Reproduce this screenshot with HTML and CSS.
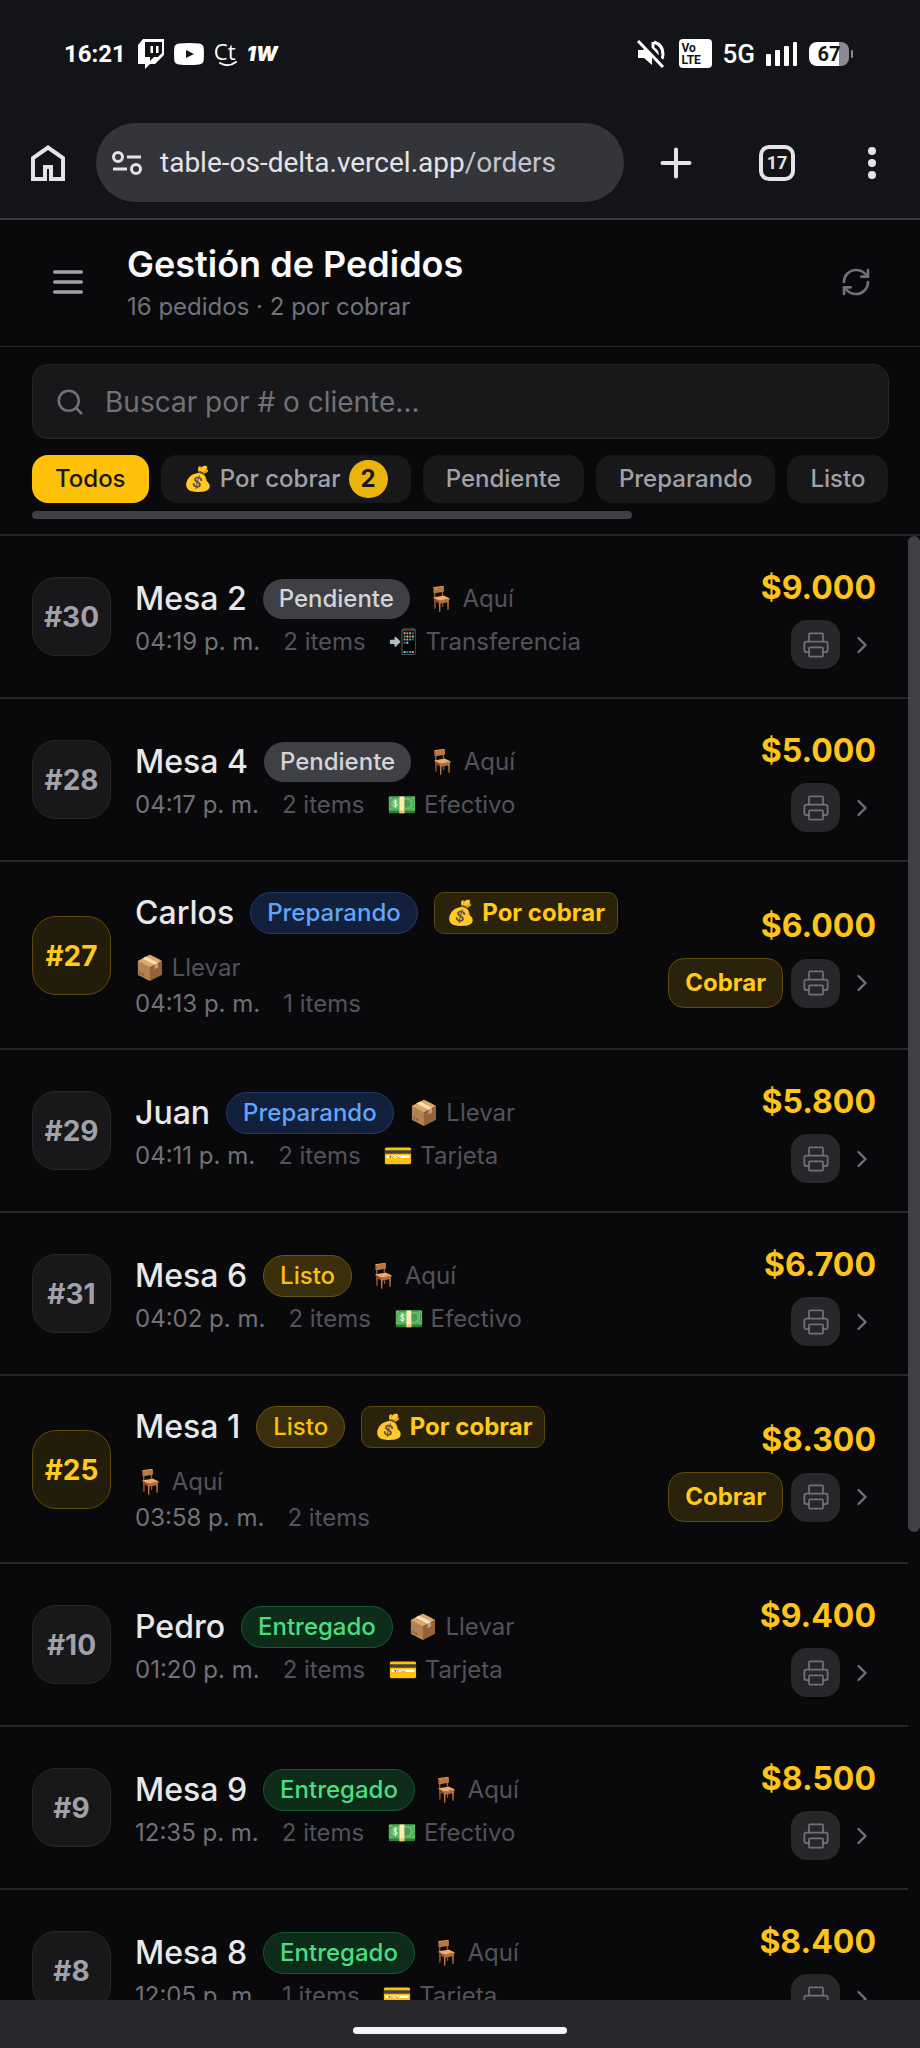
FILE: index.html
```html
<!DOCTYPE html>
<html lang="es">
<head>
	<meta charset="utf-8">
	<meta name="viewport" content="width=device-width, initial-scale=1">
	<title>Gestión de Pedidos</title>
	<link rel="stylesheet" href="styles.css">
</head>
<body>

	<!-- shared icons -->
	<svg class="defs" aria-hidden="true">
		<symbol id="i-printer" viewBox="0 0 24 24">
			<path d="M6 18H4a2 2 0 0 1-2-2v-5a2 2 0 0 1 2-2h16a2 2 0 0 1 2 2v5a2 2 0 0 1-2 2h-2"/>
			<path d="M6 9V3a1 1 0 0 1 1-1h10a1 1 0 0 1 1 1v6"/>
			<rect x="6" y="14" width="12" height="8" rx="1"/>
		</symbol>
		<symbol id="i-chevron" viewBox="0 0 24 24">
			<path d="m9 18 6-6-6-6"/>
		</symbol>
	</svg>

	<div class="browser">
		<div class="status">
			<div class="status-left">
				<span class="clock">16:21</span>
				<svg class="twitch" width="26" height="30" viewBox="0 0 26 30">
					<path fill="#fff" fill-rule="evenodd" d="M5 0h21v16l-9 9h-5l-5 5v-5H0V6zM7 3v15h5v4l4-4h4l4-4V3zM12.500 7h2.500v7h-2.500zM18 7h2.500v7H18z"/>
				</svg>
				<svg width="30" height="22" viewBox="0 0 30 22">
					<path fill="#fff" fill-rule="evenodd" d="M5 0.500Q15-.5 25 .5q4.500.5 4.700 4.500.5 6 0 12-.2 4-4.700 4.500-10 1-20 0Q.5 21 .3 17q-.5-6 0-12Q.5 1 5 .5zM12 7v8l8-4z"/>
				</svg>
				<span class="ct">Ct<svg width="18" height="6" viewBox="0 0 18 6"><path d="M1 2q8 5 16-1" fill="none" stroke="#fff" stroke-width="2" stroke-linecap="round"/></svg></span>
				<span class="onew">1W</span>
			</div>
			<div class="status-right">
				<svg width="28" height="28" viewBox="0 0 28 28" fill="none" stroke="#fff" stroke-width="3">
					<path fill="#fff" stroke="none" d="M1 10h5l4-3 5 8v10l-8-7H1z"/>
					<path d="M16 2v8M17 2q9 3 9 12 0 4-2 7M17 9q4 2 3 7"/>
					<path stroke="#131418" stroke-width="6" d="M3 0l25 26"/>
					<path d="M1 1l25 26"/>
				</svg>
				<span class="volte">Vo<br>LTE</span>
				<span class="net">5G</span>
				<svg width="32" height="24" viewBox="0 0 32 24" fill="#fff">
					<rect x="0" y="12" width="5" height="12" rx="1"/>
					<rect x="9" y="8" width="5" height="16" rx="1"/>
					<rect x="18" y="4" width="5" height="20" rx="1"/>
					<rect x="27" y="0" width="4" height="24" rx="1"/>
				</svg>
				<span class="battery">67</span>
			</div>
		</div>

		<div class="toolbar">
			<button class="tool" aria-label="Inicio">
				<svg width="34" height="36" viewBox="0 0 34 36" fill="none" stroke="#e3e3e8" stroke-width="4">
					<path d="M2 34V13L17 2.500 32 13v21H20V22h-6v12z"/>
				</svg>
			</button>
			<a class="url" href="#">
				<svg width="30" height="26" viewBox="0 0 30 26" fill="none" stroke="#e3e3e8" stroke-width="3">
					<circle cx="6" cy="7" r="4.500"/>
					<path d="M15 7h14M1 19h14"/>
					<circle cx="24" cy="19" r="4.500"/>
				</svg>
				<span>table-os-delta.vercel.app<span class="path">/orders</span></span>
			</a>
			<div class="tools">
				<button class="tool" aria-label="Nueva pestaña">
					<svg width="36" height="36" viewBox="0 0 36 36" stroke="#e3e3e8" stroke-width="4" stroke-linecap="round">
						<path d="M18 4.500v27M4.500 18h27"/>
					</svg>
				</button>
				<button class="tool tabs" aria-label="Pestañas">17</button>
				<button class="tool" aria-label="Menú">
					<svg width="24" height="36" viewBox="0 0 24 36" fill="#e3e3e8">
						<circle cx="12" cy="6" r="4"/>
						<circle cx="12" cy="18" r="4"/>
						<circle cx="12" cy="30" r="4"/>
					</svg>
				</button>
			</div>
		</div>
	</div>

	<header class="header">
		<button class="menu-btn" aria-label="Abrir menú">
			<svg class="icon" width="40" height="40" viewBox="0 0 24 24"><path d="M4 6h16M4 12h16M4 18h16"/></svg>
		</button>
		<div class="heading">
			<h1>Gestión de Pedidos</h1>
			<p>16 pedidos · 2 por cobrar</p>
		</div>
		<button class="refresh-btn" aria-label="Actualizar">
			<svg class="icon" width="32" height="32" viewBox="0 0 24 24">
				<path d="M3 12a9 9 0 0 1 9-9 9.750 9.750 0 0 1 6.740 2.740L21 8"/>
				<path d="M21 3v5h-5"/>
				<path d="M21 12a9 9 0 0 1-9 9 9.750 9.750 0 0 1-6.740-2.740L3 16"/>
				<path d="M8 16H3v5"/>
			</svg>
		</button>
	</header>

	<section class="filters">
		<label class="search">
			<svg class="icon" width="30" height="30" viewBox="0 0 24 24"><circle cx="11" cy="11" r="8"/><path d="m21 21-4.300-4.300"/></svg>
			<input type="text" placeholder="Buscar por # o cliente..." aria-label="Buscar por # o cliente">
		</label>
		<div class="chips">
			<button class="chip active">Todos</button>
			<button class="chip">💰 Por cobrar <span class="count">2</span></button>
			<button class="chip">Pendiente</button>
			<button class="chip">Preparando</button>
			<button class="chip">Listo</button>
		</div>
		<div class="hbar"></div>
	</section>

	<main class="orders">
		<ul class="list">
			<li class="order">
				<div class="num">#30</div>
				<div class="info">
					<div class="line1">
						<span class="name">Mesa 2</span>
						<span class="pill pending">Pendiente</span>
						<span class="type">🪑 Aquí</span>
					</div>
					<div class="line2"><span class="time">04:19 p. m.</span><span>2 items</span><span>📲 Transferencia</span></div>
				</div>
				<div class="side">
					<div class="price">$9.000</div>
					<div class="actions">
						<button class="print" aria-label="Imprimir"><svg class="icon thin" width="28" height="28"><use href="#i-printer"/></svg></button>
						<svg class="icon chev" width="28" height="28"><use href="#i-chevron"/></svg>
					</div>
				</div>
			</li>

			<li class="order">
				<div class="num">#28</div>
				<div class="info">
					<div class="line1">
						<span class="name">Mesa 4</span>
						<span class="pill pending">Pendiente</span>
						<span class="type">🪑 Aquí</span>
					</div>
					<div class="line2"><span class="time">04:17 p. m.</span><span>2 items</span><span>💵 Efectivo</span></div>
				</div>
				<div class="side">
					<div class="price">$5.000</div>
					<div class="actions">
						<button class="print" aria-label="Imprimir"><svg class="icon thin" width="28" height="28"><use href="#i-printer"/></svg></button>
						<svg class="icon chev" width="28" height="28"><use href="#i-chevron"/></svg>
					</div>
				</div>
			</li>

			<li class="order">
				<div class="num due">#27</div>
				<div class="info">
					<div class="line1">
						<span class="name">Carlos</span>
						<span class="pill preparing">Preparando</span>
						<span class="pill unpaid">💰 Por cobrar</span>
						<span class="type">📦 Llevar</span>
					</div>
					<div class="line2"><span class="time">04:13 p. m.</span><span>1 items</span></div>
				</div>
				<div class="side">
					<div class="price">$6.000</div>
					<div class="actions">
						<button class="charge">Cobrar</button>
						<button class="print" aria-label="Imprimir"><svg class="icon thin" width="28" height="28"><use href="#i-printer"/></svg></button>
						<svg class="icon chev" width="28" height="28"><use href="#i-chevron"/></svg>
					</div>
				</div>
			</li>

			<li class="order">
				<div class="num">#29</div>
				<div class="info">
					<div class="line1">
						<span class="name">Juan</span>
						<span class="pill preparing">Preparando</span>
						<span class="type">📦 Llevar</span>
					</div>
					<div class="line2"><span class="time">04:11 p. m.</span><span>2 items</span><span>💳 Tarjeta</span></div>
				</div>
				<div class="side">
					<div class="price">$5.800</div>
					<div class="actions">
						<button class="print" aria-label="Imprimir"><svg class="icon thin" width="28" height="28"><use href="#i-printer"/></svg></button>
						<svg class="icon chev" width="28" height="28"><use href="#i-chevron"/></svg>
					</div>
				</div>
			</li>

			<li class="order">
				<div class="num">#31</div>
				<div class="info">
					<div class="line1">
						<span class="name">Mesa 6</span>
						<span class="pill ready">Listo</span>
						<span class="type">🪑 Aquí</span>
					</div>
					<div class="line2"><span class="time">04:02 p. m.</span><span>2 items</span><span>💵 Efectivo</span></div>
				</div>
				<div class="side">
					<div class="price">$6.700</div>
					<div class="actions">
						<button class="print" aria-label="Imprimir"><svg class="icon thin" width="28" height="28"><use href="#i-printer"/></svg></button>
						<svg class="icon chev" width="28" height="28"><use href="#i-chevron"/></svg>
					</div>
				</div>
			</li>

			<li class="order">
				<div class="num due">#25</div>
				<div class="info">
					<div class="line1">
						<span class="name">Mesa 1</span>
						<span class="pill ready">Listo</span>
						<span class="pill unpaid">💰 Por cobrar</span>
						<span class="type">🪑 Aquí</span>
					</div>
					<div class="line2"><span class="time">03:58 p. m.</span><span>2 items</span></div>
				</div>
				<div class="side">
					<div class="price">$8.300</div>
					<div class="actions">
						<button class="charge">Cobrar</button>
						<button class="print" aria-label="Imprimir"><svg class="icon thin" width="28" height="28"><use href="#i-printer"/></svg></button>
						<svg class="icon chev" width="28" height="28"><use href="#i-chevron"/></svg>
					</div>
				</div>
			</li>

			<li class="order">
				<div class="num">#10</div>
				<div class="info">
					<div class="line1">
						<span class="name">Pedro</span>
						<span class="pill delivered">Entregado</span>
						<span class="type">📦 Llevar</span>
					</div>
					<div class="line2"><span class="time">01:20 p. m.</span><span>2 items</span><span>💳 Tarjeta</span></div>
				</div>
				<div class="side">
					<div class="price">$9.400</div>
					<div class="actions">
						<button class="print" aria-label="Imprimir"><svg class="icon thin" width="28" height="28"><use href="#i-printer"/></svg></button>
						<svg class="icon chev" width="28" height="28"><use href="#i-chevron"/></svg>
					</div>
				</div>
			</li>

			<li class="order">
				<div class="num">#9</div>
				<div class="info">
					<div class="line1">
						<span class="name">Mesa 9</span>
						<span class="pill delivered">Entregado</span>
						<span class="type">🪑 Aquí</span>
					</div>
					<div class="line2"><span class="time">12:35 p. m.</span><span>2 items</span><span>💵 Efectivo</span></div>
				</div>
				<div class="side">
					<div class="price">$8.500</div>
					<div class="actions">
						<button class="print" aria-label="Imprimir"><svg class="icon thin" width="28" height="28"><use href="#i-printer"/></svg></button>
						<svg class="icon chev" width="28" height="28"><use href="#i-chevron"/></svg>
					</div>
				</div>
			</li>

			<li class="order">
				<div class="num">#8</div>
				<div class="info">
					<div class="line1">
						<span class="name">Mesa 8</span>
						<span class="pill delivered">Entregado</span>
						<span class="type">🪑 Aquí</span>
					</div>
					<div class="line2"><span class="time">12:05 p. m.</span><span>1 items</span><span>💳 Tarjeta</span></div>
				</div>
				<div class="side">
					<div class="price">$8.400</div>
					<div class="actions">
						<button class="print" aria-label="Imprimir"><svg class="icon thin" width="28" height="28"><use href="#i-printer"/></svg></button>
						<svg class="icon chev" width="28" height="28"><use href="#i-chevron"/></svg>
					</div>
				</div>
			</li>
		</ul>
		<div class="vbar"></div>
	</main>

	<div class="gesture"><span></span></div>

</body>
</html>
```
FILE: styles.css
```css
* {
	box-sizing: border-box;
}

body {
	margin: 0;
	height: 100vh;
	display: flex;
	flex-direction: column;
	overflow: hidden;
	background: #09090b;
	color: #e8e8ea;
	font-family: Inter, "Noto Color Emoji", sans-serif;
	font-size: 24px;
	line-height: 32px;
}

button {
	margin: 0;
	padding: 0;
	border: 0;
	background: none;
	color: inherit;
	font: inherit;
}

svg {
	display: block;
	flex: none;
}

h1, p, ul {
	margin: 0;
	padding: 0;
}

.defs {
	position: absolute;
	width: 0;
	height: 0;
}

.icon {
	fill: none;
	stroke: currentColor;
	stroke-width: 2;
	stroke-linecap: round;
	stroke-linejoin: round;
}

.thin {
	stroke-width: 1.5;
}

/* phone status bar and browser toolbar */
.browser {
	flex: none;
	background: #131418;
	border-bottom: 2px solid #3b3c40;
	font-family: Roboto, sans-serif;
}

.status {
	display: flex;
	justify-content: space-between;
	align-items: center;
	height: 107px;
	padding: 0 67px 0 64px;
	color: #fff;
}

.status-left, .status-right {
	display: flex;
	align-items: center;
	gap: 10px;
}

.status-right {
	gap: 11px;
}

.clock {
	font-weight: 700;
	margin-right: 2px;
}

.ct {
	font-family: "Open Sans", sans-serif;
	font-size: 22px;
	line-height: 20px;
}

.ct svg {
	margin-left: 5px;
}

.onew {
	font-family: Inter, sans-serif;
	font-size: 20px;
	font-weight: 900;
	font-style: italic;
}

.volte {
	width: 33px;
	height: 29px;
	margin-left: 3px;
	padding: 3px;
	border-radius: 4px;
	background: #fff;
	color: #131418;
	font-size: 12px;
	line-height: 12px;
	font-weight: 700;
}

.net {
	font-size: 26px;
	font-weight: 500;
}

.battery {
	position: relative;
	width: 40px;
	height: 24px;
	margin-right: 4px;
	border-radius: 8px;
	background: linear-gradient(90deg, #fff 75%, #8b8b8f 75%);
	color: #131418;
	font-size: 20px;
	font-weight: 700;
	line-height: 24px;
	text-align: center;
}

.battery::after {
	content: "";
	position: absolute;
	left: 42px;
	top: 8px;
	width: 2px;
	height: 8px;
	border-radius: 1px;
	background: #8b8b8f;
}

.toolbar {
	display: flex;
	align-items: center;
	height: 111px;
	padding: 0 36px 0 31px;
	color: #e3e3e8;
}

.url {
	flex: 1;
	display: flex;
	align-items: center;
	gap: 18px;
	height: 79px;
	margin-left: 31px;
	padding: 0 16px;
	border-radius: 40px;
	background: #34353b;
	color: #e3e3e8;
	font-size: 28px;
	text-decoration: none;
	white-space: nowrap;
}

.path {
	color: #c4c5cb;
}

.tools {
	display: flex;
	justify-content: space-between;
	width: 226px;
	margin-left: 34px;
}

.tabs {
	width: 36px;
	height: 36px;
	border: 4px solid #e3e3e8;
	border-radius: 10px;
	font-size: 18px;
	font-weight: 700;
	line-height: 28px;
}

/* page header */
.header {
	flex: none;
	display: flex;
	align-items: center;
	gap: 24px;
	padding: 21px 32px 23px;
	border-bottom: 1px solid #27272a;
}

.menu-btn {
	display: flex;
	justify-content: center;
	width: 71px;
	color: #a1a1aa;
}

.heading {
	flex: 1;
}

.heading h1 {
	font-size: 36px;
	line-height: 46px;
	font-weight: 600;
	color: #fafafa;
}

.heading p {
	margin-top: 4px;
	color: #71717a;
}

.refresh-btn {
	display: flex;
	justify-content: center;
	width: 64px;
	color: #71717a;
}

/* search and filter chips */
.filters {
	flex: none;
	padding: 17px 31px 15px 32px;
	border-bottom: 2px solid #27272a;
}

.search {
	display: flex;
	align-items: center;
	gap: 20px;
	height: 75px;
	padding: 0 22px;
	border: 1px solid #27272a;
	border-radius: 16px;
	background: #18181b;
	color: #71717a;
}

.search input {
	flex: 1;
	min-width: 0;
	padding: 0;
	border: 0;
	outline: 0;
	background: none;
	color: #fafafa;
	font: inherit;
	font-size: 28px;
}

.search input::placeholder {
	color: #71717a;
	opacity: 1;
}

.chips {
	display: flex;
	gap: 12px;
	margin-top: 16px;
	overflow: hidden;
}

.chip {
	flex: none;
	display: flex;
	align-items: center;
	gap: 8px;
	height: 48px;
	padding: 0 23px;
	border-radius: 16px;
	background: #18181b;
	color: #a1a1aa;
	font-weight: 500;
	white-space: nowrap;
}

.chip.active {
	background: #ffc107;
	color: #18181b;
}

.count {
	padding: 3px 12px;
	border-radius: 20px;
	background: #ecb40b;
	color: #18181b;
	font-weight: 700;
}

.hbar {
	width: 70%;
	height: 8px;
	margin-top: 8px;
	border-radius: 4px;
	background: #3f3f46;
}

/* order list */
.orders {
	flex: 1;
	min-height: 0;
	display: flex;
	overflow: hidden;
}

.list {
	flex: 1;
	list-style: none;
}

.order {
	display: flex;
	align-items: center;
	gap: 24px;
	padding: 28px 32px;
	border-bottom: 2px solid #27272a;
}

.num {
	flex: none;
	width: 79px;
	height: 79px;
	border: 1px solid #27272a;
	border-radius: 24px;
	background: #18181b;
	color: #a1a1aa;
	font-size: 28px;
	font-weight: 700;
	line-height: 78px;
	text-align: center;
}

.num.due {
	border-color: #5f4a0a;
	background: #221c0b;
	color: #ffca1a;
}

.info {
	flex: 1;
	min-width: 0;
}

.line1 {
	display: flex;
	flex-wrap: wrap;
	align-items: center;
	gap: 16px;
}

.name {
	font-size: 32px;
	line-height: 46px;
	font-weight: 500;
}

.pill {
	padding: 4px 16px;
	border: 1px solid transparent;
	border-radius: 21px;
	font-weight: 500;
}

.pending {
	padding: 4px 16px;
	border: 0;
	background: #3f3f46;
	color: #d4d4d8;
}

.preparing {
	border-color: #1e3a6e;
	background: #13203b;
	color: #60a5fa;
}

.ready {
	border-color: #6b5511;
	background: #3a2e0b;
	color: #ffc107;
}

.delivered {
	border-color: #14592f;
	background: #0e2c1a;
	color: #4ade80;
}

.unpaid {
	padding: 4px 12px;
	border-color: #5a470c;
	border-radius: 10px;
	background: #2a220b;
	color: #ffca1a;
	font-weight: 700;
}

.type {
	color: #52525b;
}

.line2 {
	display: flex;
	gap: 23px;
	margin-top: 4px;
	color: #52525b;
}

.time {
	color: #71717a;
}

.side {
	flex: none;
	display: flex;
	flex-direction: column;
	align-items: flex-end;
	gap: 9px;
}

.price {
	color: #ffc41a;
	font-size: 32px;
	line-height: 47px;
	font-weight: 700;
}

.actions {
	display: flex;
	align-items: center;
	gap: 8px;
}

.charge {
	padding: 8px 16px;
	border: 1px solid #5f4a0a;
	border-radius: 16px;
	background: #2a220b;
	color: #ffca1a;
	font-weight: 700;
}

.print {
	display: flex;
	align-items: center;
	justify-content: center;
	width: 49px;
	height: 49px;
	border-radius: 16px;
	background: #27272a;
	color: #71717a;
}

.chev {
	color: #71717a;
}

.vbar {
	width: 12px;
	height: 68%;
	border-radius: 6px;
	background: #3f3f46;
}

/* gesture bar */
.gesture {
	flex: none;
	display: flex;
	align-items: center;
	justify-content: center;
	height: 48px;
	padding-top: 13px;
	background: #28282d;
}

.gesture span {
	width: 214px;
	height: 7px;
	border-radius: 4px;
	background: #f4f4f5;
}
```
